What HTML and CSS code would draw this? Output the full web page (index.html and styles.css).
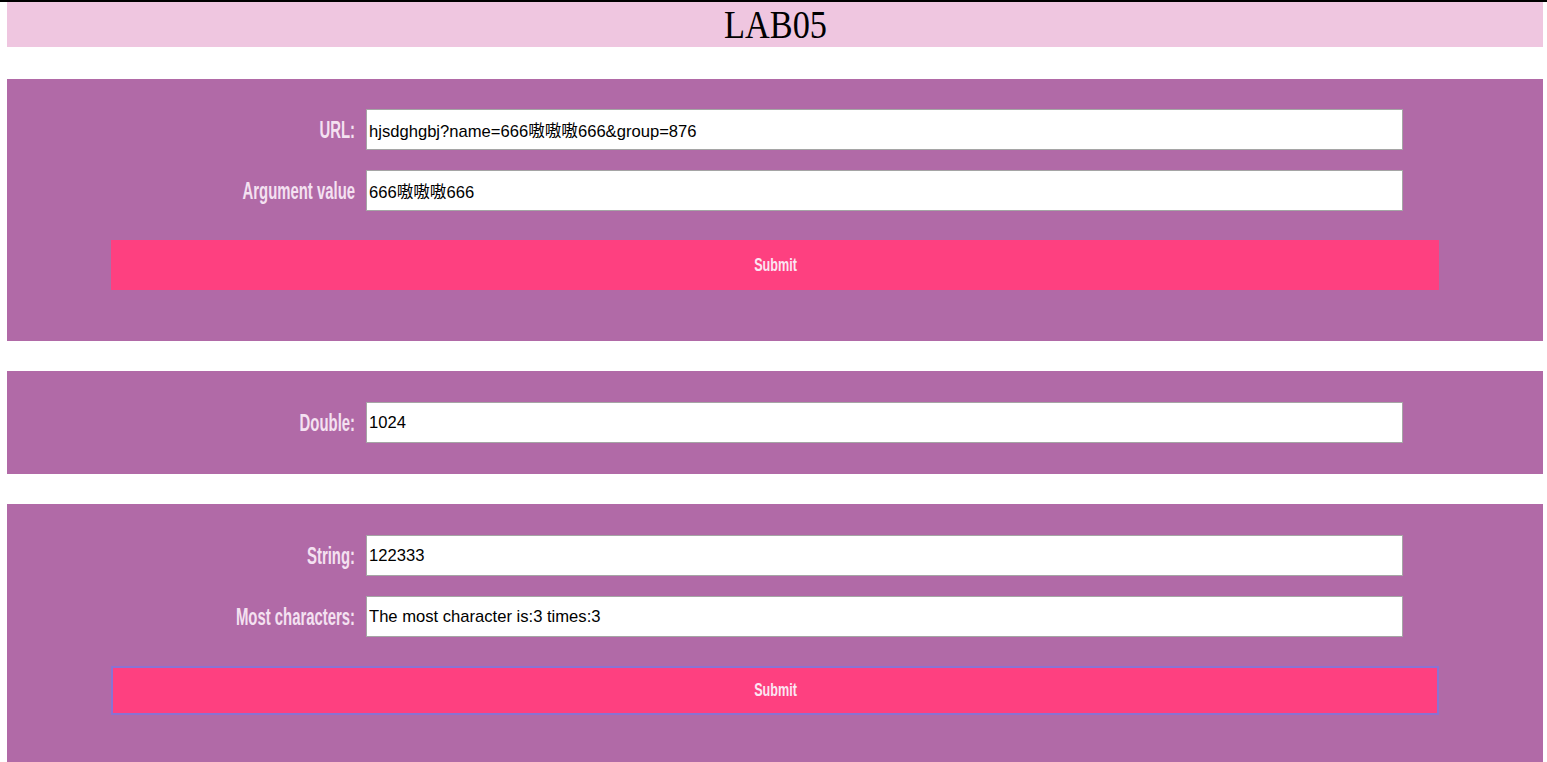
FILE: index.html
```html
<!DOCTYPE html>
<html lang="en">
<head>
<meta charset="utf-8">
<title>LAB05</title>
<link rel="stylesheet" href="styles.css">
</head>
<body>
<header class="title-bar"><h1 class="title">LAB05</h1></header>

<section class="panel panel-first">
  <div class="fields">
    <label class="label" for="url">URL:</label>
    <input class="field" id="url" type="text" value="hjsdghgbj?name=666嗷嗷嗷666&amp;group=876">
    <label class="label" for="arg">Argument value</label>
    <input class="field" id="arg" type="text" value="666嗷嗷嗷666">
  </div>
  <button class="submit" type="button"><span class="submit-text">Submit</span></button>
</section>

<section class="panel panel-short">
  <div class="fields">
    <label class="label" for="dbl">Double:</label>
    <input class="field" id="dbl" type="text" value="1024">
  </div>
</section>

<section class="panel panel-last">
  <div class="fields">
    <label class="label" for="str">String:</label>
    <input class="field" id="str" type="text" value="122333">
    <label class="label" for="most">Most characters:</label>
    <input class="field" id="most" type="text" value="The most character is:3 times:3">
  </div>
  <button class="submit submit-focus" type="button"><span class="submit-text">Submit</span></button>
</section>
</body>
</html>
```

FILE: styles.css
```css
html, body {
  margin: 0;
  background: #ffffff;
}
body {
  border-top: 2px solid #000;
  padding: 0 4px 0 7px;
  overflow: hidden;
  height: 760px;
}
.title-bar {
  background: #efc6e0;
  height: 45px;
  display: flex;
  align-items: center;
  justify-content: center;
}
.title {
  margin: 0;
  font-family: "Liberation Serif", "DejaVu Serif", serif;
  font-weight: normal;
  font-size: 39px;
  color: #000;
  line-height: 45px;
  transform: scaleX(0.88);
}
.panel {
  background: #b16aa7;
  margin-top: 32px;
  padding: 30px 104px 51px;
}
.panel-short {
  margin-top: 30px;
  padding: 31px 104px 31px;
}
.panel-last {
  margin-top: 30px;
  padding: 31px 104px 60px;
}
.fields {
  display: grid;
  grid-template-columns: 244px 1037px;
  column-gap: 11px;
  row-gap: 20px;
  align-items: center;
}
.label {
  text-align: right;
  font-family: "Liberation Sans", Arial, sans-serif;
  font-weight: bold;
  font-size: 24px;
  color: #f4e1f1;
  white-space: nowrap;
  transform: scaleX(0.62);
  transform-origin: right center;
}
.field {
  box-sizing: border-box;
  height: 41px;
  width: 1037px;
  margin: 0;
  border: 1px solid #a5a5a5;
  padding: 0 2px;
  background: #fff;
  font-family: "Liberation Sans", Arial, "Noto Sans CJK SC", sans-serif;
  font-size: 16.6px;
  color: #000;
  outline: none;
}
.submit {
  display: flex;
  align-items: center;
  justify-content: center;
  box-sizing: border-box;
  width: 1328px;
  height: 50px;
  margin-top: 29px;
  border: 0;
  padding: 0;
  background: #fe4080;
  cursor: pointer;
}
.submit-text {
  display: inline-block;
  color: #fbe6f2;
  font-family: "Liberation Sans", Arial, sans-serif;
  font-weight: bold;
  font-size: 18px;
  transform: scaleX(0.7);
}
.submit-focus {
  height: 49px;
  border: 2px solid #8a72d2;
}
```
